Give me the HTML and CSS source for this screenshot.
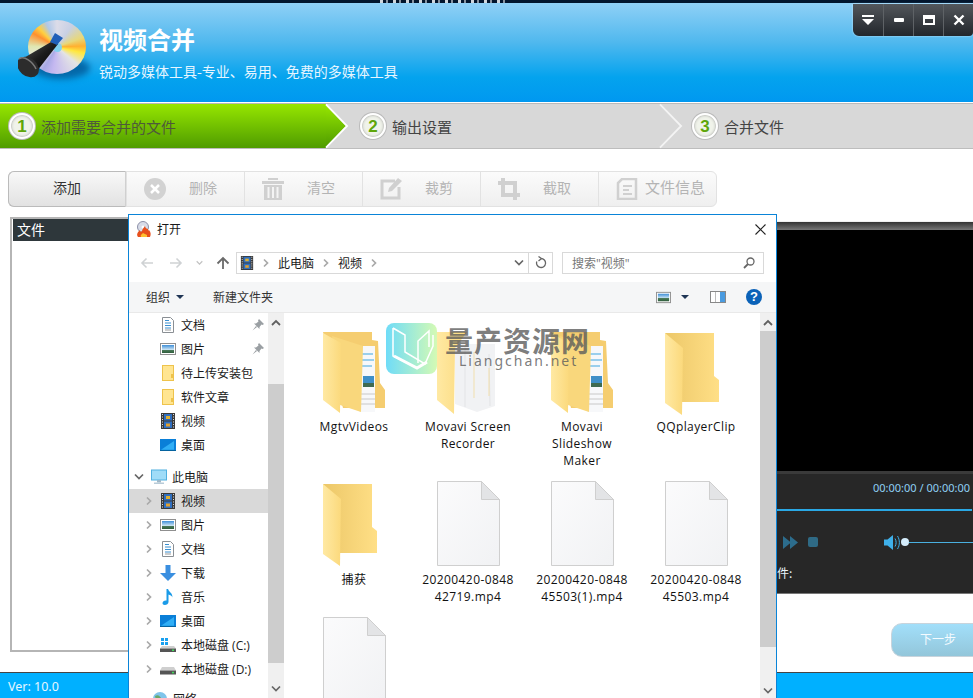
FILE: index.html
```html
<!DOCTYPE html>
<html lang="zh-CN">
<head>
<meta charset="utf-8">
<title>视频合并</title>
<link rel="stylesheet" href="styles.css">
</head>
<body>
<svg class="defs" aria-hidden="true">
  <defs>
    <linearGradient id="gGreen" x1="0" y1="0" x2="0" y2="1"><stop offset="0" stop-color="#96e600"/><stop offset="1" stop-color="#4f9c00"/></linearGradient>
    <linearGradient id="gFlap" x1="0" y1="0" x2="1" y2="0"><stop offset="0" stop-color="#ffe9a3"/><stop offset="1" stop-color="#fbd97c"/></linearGradient>
    <linearGradient id="gBack" x1="0" y1="0" x2="1" y2="0"><stop offset="0" stop-color="#ecc768"/><stop offset="1" stop-color="#ffdf86"/></linearGradient>
    <linearGradient id="gDoc" x1="0" y1="0" x2="1" y2="1"><stop offset="0" stop-color="#fbfbfc"/><stop offset="1" stop-color="#f1f2f4"/></linearGradient>
    <linearGradient id="gSky" x1="0" y1="0" x2="0" y2="1"><stop offset="0" stop-color="#3f8fd8"/><stop offset=".6" stop-color="#cfe6f4"/><stop offset=".6" stop-color="#4d7d5c"/><stop offset="1" stop-color="#2f5d3c"/></linearGradient>
    <symbol id="film" viewBox="0 0 16 16"><rect x="1" y="0" width="14" height="16" fill="#3a3a3a"/><rect x="4" y="1" width="8" height="6.5" fill="#2f6fc0"/><rect x="4" y="8.5" width="8" height="6.5" fill="#2f6fc0"/><rect x="6" y="3" width="4" height="3" fill="#e0b030"/><rect x="6" y="10.500" width="4" height="3" fill="#e0a030"/><path d="M2 1.500h1M2 4h1M2 6.500h1M2 9h1M2 11.500h1M2 14h1M13 1.500h1M13 4h1M13 6.500h1M13 9h1M13 11.500h1M13 14h1" stroke="#ddd" stroke-width="1.200"/></symbol>
    <symbol id="sdoc" viewBox="0 0 16 16"><path d="M2.500.5h8l3 3v12h-11z" fill="#fff" stroke="#8a8f94"/><path d="M5 3.500h4M5 6h6M5 8.500h6M5 11h6" stroke="#3a8fd0" stroke-width="1.100"/><path d="M5 13h6" stroke="#999"/></symbol>
    <symbol id="spic" viewBox="0 0 16 16"><rect x=".5" y="2.500" width="15" height="11" fill="#fff" stroke="#8f8f8f"/><rect x="2" y="4" width="12" height="8" fill="url(#gSky)"/></symbol>
    <symbol id="sfolder" viewBox="0 0 16 16"><rect x="2.500" y=".5" width="11" height="15" fill="#ffe591" stroke="#eec34c"/><rect x="11" y="9" width="2" height="4" fill="#eec34c"/></symbol>
    <symbol id="sdesk" viewBox="0 0 16 16"><rect x="0" y="2" width="16" height="12" fill="#0a7fd8"/><path d="M1 12.800 14 4v8.800z" fill="#30aef5"/><rect x="0" y="13" width="16" height="1" fill="#05639f"/></symbol>
    <symbol id="spc" viewBox="0 0 16 16"><rect x=".5" y="1" width="15" height="10" fill="#9fdcf8" stroke="#50b0e0"/><rect x="6" y="11" width="4" height="2.500" fill="#9fb8c8"/><rect x="3" y="13.500" width="10" height="1.500" fill="#b8cbd8"/></symbol>
    <symbol id="sdown" viewBox="0 0 16 16"><path d="M5.500 0h5v8H16l-8 8-8-8h5.500z" fill="#3a8fe0"/></symbol>
    <symbol id="snote" viewBox="0 0 16 16"><path d="M6.500 0h1.600c.5 3 4.900 4 4.200 8.500C12 6.500 10 6 8.500 5.500V13c0 2-2 3-3.700 3C3.200 16 2.500 15 2.500 14c0-1.500 2-3 4-2.500z" fill="#1a9be8"/></symbol>
    <symbol id="sdriveC" viewBox="0 0 16 16"><rect x="1" y="1" width="3" height="3" fill="#18a0f0"/><rect x="5" y="1" width="3" height="3" fill="#18a0f0"/><rect x="1" y="5" width="3" height="3" fill="#18a0f0"/><rect x="5" y="5" width="3" height="3" fill="#18a0f0"/><path d="M2 9h12l2 2.500H0z" fill="#cfcfcf"/><rect y="11.500" width="16" height="3.500" fill="#555"/><rect x="12" y="12.500" width="2" height="1.500" fill="#3fdc5a"/></symbol>
    <symbol id="sdriveD" viewBox="0 0 16 16"><path d="M2 6h12l2 3.500H0z" fill="#cfcfcf"/><rect y="9.500" width="16" height="4" fill="#555"/><rect x="12" y="10.800" width="2" height="1.500" fill="#3fdc5a"/></symbol>
    <symbol id="snet" viewBox="0 0 16 16"><circle cx="8" cy="8" r="7" fill="#7fc4ea"/><path d="M3 5c3-2 5 0 6 2s-3 4-5 2z" fill="#6aa86a"/></symbol>
    <symbol id="gt" viewBox="0 0 8 10"><path d="M2 1.500 5.500 5 2 8.500" fill="none" stroke="#a9a9a9" stroke-width="1.700"/></symbol>
    <symbol id="dn" viewBox="0 0 10 8"><path d="M1 1.500 5 5.500 9 1.500" fill="none" stroke="#666" stroke-width="1.700"/></symbol>
    <symbol id="up" viewBox="0 0 10 8"><path d="M1 6 5 2 9 6" fill="none" stroke="#606060" stroke-width="1.800"/></symbol>
    <symbol id="pin" viewBox="0 0 12 12"><path d="M7 0 12 5 10.500 6 9.500 5.500 7.500 8 7.500 10 2 4.500 4 4.500 6.500 2.500 6 1.500zM4 7 .5 11.500 5 8z" fill="#9a9fa3"/></symbol>
    <symbol id="bigdoc" viewBox="0 0 63 85"><path d="M.5.5h44l18 18v66H.5z" fill="url(#gDoc)" stroke="#cfcfcf"/><path d="M44.500.5v18h18z" fill="#e3e4e6" stroke="#cfcfcf"/></symbol>
    <symbol id="fplain" viewBox="0 0 54 82"><path d="M0 0h49v43l5 4v22H17L0 0z" fill="url(#gBack)"/><path d="M0 0 18 15 17 82 0 70z" fill="url(#gFlap)"/></symbol>
    <symbol id="fdocs" viewBox="0 0 62 84"><path d="M0 0h49v8l6 1 2 42 5 7 1 18H20z" fill="#f5cd70"/><path d="M36 14h16v66H36z" fill="#f7f8fa"/><path d="M39 22h11M39 28h12M39 34h10" stroke="#3fa5e0" stroke-width="1.200"/><rect x="40" y="44" width="11" height="11" fill="#3f8fc8"/><rect x="40" y="51" width="11" height="4" fill="#3f6a50"/><path d="M38 62h14M38 67h14M38 72h14" stroke="#c8c8c8"/><path d="M9 4 40 14 38 80 17 73z" fill="#f9d77c"/><path d="M0 1 18 11 17 81 0 68z" fill="url(#gFlap)"/></symbol>
    <symbol id="fwhite" viewBox="0 0 62 84"><path d="M18 12h40v62l-18 6-22-8z" fill="#f1f2f4"/><path d="M28 15v60M52 22 53 74" stroke="#e3e4e6"/><path d="M37 20v46M52 36v28" stroke="#f1dfae"/><path d="M0 0h30L18 16 17 82 0 68z" fill="url(#gFlap)"/></symbol>
  </defs>
</svg>

<div class="app">
  <div class="topstrip"><span class="topstrip-bits"></span></div>
  <header class="header">
    <div class="logo">
      <div class="logo-shadow"></div>
      <div class="logo-disc"><div class="logo-hole"></div></div>
      <svg class="logo-torch" viewBox="0 0 72 68"><defs><linearGradient id="gTorch" x1="0" y1="0" x2="1" y2="1"><stop offset="0" stop-color="#555"/><stop offset=".5" stop-color="#1c1c1c"/><stop offset="1" stop-color="#000"/></linearGradient></defs><path d="M33 23 40 25 19 52 4 40z" fill="url(#gTorch)"/><path d="M32 23 37 14 45 19 39 26z" fill="#1f5fb8"/><ellipse cx="10" cy="48" rx="12" ry="9" transform="rotate(40 10 48)" fill="#2c2c2c"/><path d="M1 40C6 36 15 43 18 50" fill="none" stroke="#7a7a7a" stroke-width="1.500"/></svg>
    </div>
    <div class="brand">
      <h1 class="brand-title">视频合并</h1>
      <p class="brand-sub">锐动多媒体工具-专业、易用、免费的多媒体工具</p>
    </div>
    <div class="winctl">
      <button class="winbtn"><svg width="14" height="14" viewBox="0 0 14 14"><path d="M1 2h12v2H1zM1 6h12l-6 6z" fill="#fff"/></svg></button>
      <button class="winbtn"><svg width="12" height="12" viewBox="0 0 12 12"><rect x="1" y="4" width="10" height="4" rx="1" fill="#fff"/></svg></button>
      <button class="winbtn"><svg width="12" height="12" viewBox="0 0 12 12"><path d="M0 1h12v10H0zM2 5v4h8V5z" fill="#fff" fill-rule="evenodd"/></svg></button>
      <button class="winbtn"><svg width="12" height="12" viewBox="0 0 12 12"><path d="M1.500 1.500l9 9M10.500 1.500l-9 9" stroke="#fff" stroke-width="2.400"/></svg></button>
    </div>
  </header>

  <nav class="steps">
    <div class="step step-active step-one"><span class="step-num">1</span><span class="step-text">添加需要合并的文件</span></div>
    <svg class="chev" viewBox="0 0 24 45"><path d="M0 0 22 22.500 0 45z" fill="url(#gGreen)"/><path d="M0 -1 23 22.500 0 46" fill="none" stroke="#fff" stroke-width="2"/></svg>
    <div class="step step-two"><span class="step-num">2</span><span class="step-text">输出设置</span></div>
    <svg class="chev" viewBox="0 0 24 45"><path d="M0 -1 23 22.500 0 46" fill="none" stroke="#f4f4f4" stroke-width="2"/></svg>
    <div class="step step-three"><span class="step-num">3</span><span class="step-text">合并文件</span></div>
  </nav>

  <div class="toolbar">
    <button class="tool tool-add">添加</button>
    <button class="tool"><svg class="tool-icon" viewBox="0 0 22 22"><circle cx="11" cy="11" r="11" fill="#d2d2d2"/><path d="M7 7l8 8M15 7l-8 8" stroke="#fff" stroke-width="2.500"/></svg><span>删除</span></button>
    <button class="tool"><svg class="tool-icon" viewBox="0 0 22 22"><path d="M0 3h22v3H0zM6 0h10v2H6zM2 7h18v15H2zM6 9v11M11 9v11M16 9v11" fill="#d0d0d0"/><path d="M6.500 9v11M11 9v11M15.500 9v11" stroke="#f4f4f4" stroke-width="2"/></svg><span>清空</span></button>
    <button class="tool"><svg class="tool-icon" viewBox="0 0 22 22"><path d="M15 3H2v17h17V9" fill="none" stroke="#d0d0d0" stroke-width="3"/><path d="M9 10 18 0l4 3-10 10-4 1z" fill="#d0d0d0"/></svg><span>裁剪</span></button>
    <button class="tool"><svg class="tool-icon" viewBox="0 0 22 22"><path d="M5 0v17h17M0 5h17v17" fill="none" stroke="#d0d0d0" stroke-width="4"/></svg><span>截取</span></button>
    <button class="tool tool-wide"><svg class="tool-icon" viewBox="0 0 22 22"><path d="M6 1h14v20H2V5z" fill="none" stroke="#d0d0d0" stroke-width="2.500"/><path d="M7 8h9M7 12h6M7 16h9" stroke="#d0d0d0" stroke-width="2"/></svg><span>文件信息</span></button>
  </div>

  <main class="main">
    <section class="filelist"><div class="filelist-head">文件</div></section>
    <section class="rightcol">
      <div class="player">
        <div class="player-top"></div>
        <div class="player-video"></div>
        <div class="player-panel">
          <div class="player-time">00:00:00 / 00:00:00</div>
          <div class="player-line"></div>
          <div class="player-controls">
            <svg class="ctl-ff" viewBox="0 0 15 13"><path d="M0 0 8 6.500 0 13zM7 0 15 6.500 7 13z" fill="#2c6c8c"/></svg>
            <span class="ctl-stop"></span>
            <svg class="ctl-vol" viewBox="0 0 16 15"><path d="M0 4.500h3.500L9 0v15L3.500 10.500H0z" fill="#3fb0ea"/><path d="M11 3.500c1.500 2.500 1.500 5.500 0 8M13.500 1c2.500 4 2.500 9 0 13" fill="none" stroke="#3fb0ea"/></svg>
            <span class="ctl-knob"></span>
            <span class="ctl-slider"></span>
          </div>
          <div class="player-file">件:</div>
        </div>
      </div>
      <button class="nextbtn">下一步</button>
    </section>
  </main>

  <footer class="footer">Ver: 10.0</footer>
</div>

<div class="dialog">
  <div class="dlg-title">
    <svg class="dlg-appicon" viewBox="0 0 16 16"><circle cx="7" cy="6" r="5.500" fill="#d8dce8" stroke="#8c90a8"/><circle cx="7" cy="6" r="1.500" fill="#fff"/><path d="M2 16c-2-3 0-5 2-7 0 2 1 2 2 1 0-2 2-3 3-5 0 2 2 3 3 3 0 1 0 2 1 1 2 2 2 5 1 7z" fill="#e8501c"/><path d="M5 16c-1-2 1-3 2-4 1 1 3 1 4 2l0 2z" fill="#ffc030"/></svg>
    <span class="dlg-title-text">打开</span>
    <svg class="dlg-close" viewBox="0 0 11 11"><path d="M.5.5l10 10M10.500.5l-10 10" stroke="#222" stroke-width="1.100"/></svg>
  </div>

  <div class="dlg-nav">
    <svg class="nav-arrow" viewBox="0 0 14 12"><path d="M13 6H2M6.500 1.500 2 6l4.500 4.500" fill="none" stroke="#cfd2d4" stroke-width="1.600"/></svg>
    <svg class="nav-arrow nav-fwd" viewBox="0 0 14 12"><path d="M1 6h11M7.500 1.500 12 6l-4.500 4.500" fill="none" stroke="#cfd2d4" stroke-width="1.600"/></svg>
    <svg class="nav-small"><use href="#dn"/></svg>
    <svg class="nav-up" viewBox="0 0 14 14"><path d="M7 13V2M1.500 7.500 7 2l5.500 5.500" fill="none" stroke="#6a6a6a" stroke-width="1.800"/></svg>
    <div class="addr">
      <svg class="addr-film"><use href="#film"/></svg>
      <svg class="addr-gt"><use href="#gt"/></svg>
      <span>此电脑</span>
      <svg class="addr-gt"><use href="#gt"/></svg>
      <span>视频</span>
      <svg class="addr-gt"><use href="#gt"/></svg>
      <svg class="addr-dd"><use href="#dn"/></svg>
      <span class="addr-refresh"><svg viewBox="0 0 12 13"><path d="M6 2.500a4.500 4.500 0 1 1-4.200 3M3.500.5 6.500 2.500 3.500 5" fill="none" stroke="#666" stroke-width="1.300"/></svg></span>
    </div>
    <div class="search">
      <span class="search-text">搜索"视频"</span>
      <svg class="search-icon" viewBox="0 0 12 12"><circle cx="7.500" cy="4.500" r="3.500" fill="none" stroke="#666" stroke-width="1.300"/><path d="M5 7 1 11" stroke="#666" stroke-width="1.800"/></svg>
    </div>
  </div>

  <div class="dlg-cmd">
    <span class="cmd-item">组织<i class="caret"></i></span>
    <span class="cmd-item cmd-new">新建文件夹</span>
    <svg class="cmd-pic"><use href="#spic"/></svg>
    <i class="caret cmd-caret"></i>
    <svg class="cmd-pane" viewBox="0 0 16 12"><rect x=".5" y=".5" width="15" height="11" fill="#fff" stroke="#888"/><rect x="10" y="1" width="5" height="10" fill="#4a9be0"/><path d="M5.500 1v10" stroke="#bbb"/></svg>
    <span class="cmd-help">?</span>
  </div>

  <div class="dlg-body">
    <div class="tree">
      <div class="row row-l2"><svg class="row-icon"><use href="#sdoc"/></svg><span>文档</span><svg class="row-pin"><use href="#pin"/></svg></div>
      <div class="row row-l2"><svg class="row-icon"><use href="#spic"/></svg><span>图片</span><svg class="row-pin"><use href="#pin"/></svg></div>
      <div class="row row-l2"><svg class="row-icon"><use href="#sfolder"/></svg><span>待上传安装包</span></div>
      <div class="row row-l2"><svg class="row-icon"><use href="#sfolder"/></svg><span>软件文章</span></div>
      <div class="row row-l2"><svg class="row-icon"><use href="#film"/></svg><span>视频</span></div>
      <div class="row row-l2"><svg class="row-icon"><use href="#sdesk"/></svg><span>桌面</span></div>
      <div class="row row-l1 row-group"><svg class="row-exp-dn"><use href="#dn"/></svg><svg class="row-icon"><use href="#spc"/></svg><span>此电脑</span></div>
      <div class="row row-sel"><svg class="row-exp"><use href="#gt"/></svg><svg class="row-icon"><use href="#film"/></svg><span>视频</span></div>
      <div class="row"><svg class="row-exp"><use href="#gt"/></svg><svg class="row-icon"><use href="#spic"/></svg><span>图片</span></div>
      <div class="row"><svg class="row-exp"><use href="#gt"/></svg><svg class="row-icon"><use href="#sdoc"/></svg><span>文档</span></div>
      <div class="row"><svg class="row-exp"><use href="#gt"/></svg><svg class="row-icon"><use href="#sdown"/></svg><span>下载</span></div>
      <div class="row"><svg class="row-exp"><use href="#gt"/></svg><svg class="row-icon"><use href="#snote"/></svg><span>音乐</span></div>
      <div class="row"><svg class="row-exp"><use href="#gt"/></svg><svg class="row-icon"><use href="#sdesk"/></svg><span>桌面</span></div>
      <div class="row"><svg class="row-exp"><use href="#gt"/></svg><svg class="row-icon"><use href="#sdriveC"/></svg><span>本地磁盘 (C:)</span></div>
      <div class="row"><svg class="row-exp"><use href="#gt"/></svg><svg class="row-icon"><use href="#sdriveD"/></svg><span>本地磁盘 (D:)</span></div>
      <div class="row row-l1 row-group2"><svg class="row-icon"><use href="#snet"/></svg><span>网络</span></div>
    </div>
    <div class="scroll scroll-tree">
      <svg class="scroll-btn"><use href="#up"/></svg>
      <div class="thumb thumb-tree"></div>
      <svg class="scroll-btn scroll-btn-dn"><use href="#dn"/></svg>
    </div>
    <div class="files">
      <div class="item"><svg class="ic-folder"><use href="#fdocs"/></svg><div class="label">MgtvVideos</div></div>
      <div class="item"><svg class="ic-folder"><use href="#fwhite"/></svg><div class="label">Movavi Screen Recorder</div></div>
      <div class="item"><svg class="ic-folder"><use href="#fdocs"/></svg><div class="label">Movavi Slideshow Maker</div></div>
      <div class="item"><svg class="ic-plain"><use href="#fplain"/></svg><div class="label">QQplayerClip</div></div>
      <div class="item item-low"><svg class="ic-plain"><use href="#fplain"/></svg><div class="label">捕获</div></div>
      <div class="item item-low"><svg class="ic-doc"><use href="#bigdoc"/></svg><div class="label">20200420-0848 42719.mp4</div></div>
      <div class="item item-low"><svg class="ic-doc"><use href="#bigdoc"/></svg><div class="label">20200420-0848 45503(1).mp4</div></div>
      <div class="item item-low"><svg class="ic-doc"><use href="#bigdoc"/></svg><div class="label">20200420-0848 45503.mp4</div></div>
      <div class="item"><svg class="ic-doc"><use href="#bigdoc"/></svg></div>
    </div>
    <div class="scroll scroll-files">
      <svg class="scroll-btn"><use href="#up"/></svg>
      <div class="thumb thumb-files"></div>
      <svg class="scroll-btn scroll-btn-dn2"><use href="#dn"/></svg>
    </div>
    <div class="wm">
      <div class="wm-tile"><svg viewBox="0 0 51 51"><path d="M8 6 20 13V30L40 42 48 24V13M8 6V34L32 46 41 40" fill="none" stroke="#fff" stroke-width="1.500" transform="translate(-1 -1)"/><path d="M9 36 32 48 42 42" fill="none" stroke="#fff" stroke-width="3" transform="translate(-1 -3)"/><path d="M32 40V18L43 8V24" fill="none" stroke="#fff" stroke-width="1.500"/></svg></div>
      <div class="wm-text">
        <div class="wm-cn">量产资源网</div>
        <div class="wm-en">Liangchan.net</div>
      </div>
    </div>
  </div>
</div>
</body>
</html>
```

FILE: styles.css
```css
* { box-sizing: border-box; }
html, body { margin: 0; padding: 0; height: 698px; overflow: hidden; background: #fff; }
body { position: relative; font-family: "Noto Sans CJK SC", "Noto Sans", sans-serif; color: #333; }
button { font-family: inherit; padding: 0; margin: 0; }
.defs { position: absolute; width: 0; height: 0; }

.app { display: flex; flex-direction: column; height: 698px; width: 973px; overflow: hidden; }
.topstrip { height: 3px; background: #02162e; flex: none; padding-left: 380px; }
.topstrip-bits { display: block; width: 130px; height: 3px; background: repeating-linear-gradient(90deg, #cfd6dc 0 3px, #02162e 3px 6px, #8893a0 6px 8px, #02162e 8px 13px); }

.header { position: relative; flex: none; height: 99px; display: flex; padding: 16px 0 0 18px; background: linear-gradient(#8fd0f6 0%, #4fb8ee 40%, #04a3ee 75%, #0098f0 100%); }
.logo { position: relative; width: 72px; height: 68px; margin-right: 9px; flex: none; }
.logo-shadow { position: absolute; left: 14px; top: 38px; width: 58px; height: 22px; border-radius: 50%; background: #0468a8; filter: blur(3px); }
.logo-disc { position: absolute; left: 10px; top: 1px; width: 58px; height: 54px; border-radius: 50%; display: flex; align-items: center; justify-content: center;
  background: conic-gradient(#dcdce8 0deg, #c8d0e4 35deg, #e8d878 70deg, #ffb030 88deg, #ffe840 103deg, #e4e4e4 130deg, #c4b8f0 190deg, #a8a8e4 212deg, #ececec 240deg, #dfe6b0 272deg, #ff9030 300deg, #ffd040 316deg, #b0c8e8 336deg, #dcdce8 360deg); }
.logo-hole { width: 9px; height: 9px; border-radius: 50%; background: #7fd0f0; }
.logo-torch { position: absolute; left: 0; top: 0; width: 72px; height: 68px; }
.brand { display: flex; flex-direction: column; }
.brand-title { margin: 4px 0 0; font-size: 24px; line-height: 32px; height: 32px; color: #fff; font-weight: 700; }
.brand-sub { margin: 6px 0 0; font-size: 14px; line-height: 20px; color: #e6f5ff; }

.winctl { position: absolute; right: 0; top: 1px; width: 120px; height: 32px; display: flex; background: linear-gradient(#53575c, #22262b); border-bottom-left-radius: 6px; border-bottom-right-radius: 4px; box-shadow: 0 0 2px #d8f0ff; }
.winbtn { width: 30px; height: 32px; border: 0; border-left: 1px solid #5e6266; background: transparent; display: flex; align-items: center; justify-content: center; }
.winbtn:first-child { border-left: 0; }

.steps { flex: none; height: 46px; margin-top: 1px; display: flex; background: #d8d8d8; border-top: 1px solid #b9b9b9; border-bottom: 1px solid #bdbdbd; }
.step { display: flex; align-items: center; height: 100%; font-size: 15px; color: #444; }
.step-one { width: 326px; padding-left: 9px; }
.step-two { width: 312px; padding-left: 12px; }
.step-three { flex: 1; padding-left: 10px; }
.step-active { background: linear-gradient(#96e600, #4f9c00); color: #4e5a3a; }
.chev { width: 22px; height: 44px; flex: none; overflow: visible; }
.step-num { width: 26px; height: 26px; border-radius: 50%; margin-right: 6px; background: #f0f3ea; border: 2px solid #fff; box-shadow: 0 0 0 1px #bbb, inset 0 0 3px #999; display: flex; align-items: center; justify-content: center; font: 700 17px/1 "Liberation Sans", sans-serif; color: #5fa60a; }

.toolbar { flex: none; display: flex; width: 709px; height: 36px; margin: 22px 0 0 8px; border: 1px solid #e2e2e2; border-radius: 6px; background: linear-gradient(#fbfbfb, #efefef); }
.tool { width: 118px; height: 100%; display: flex; align-items: center; border: 0; border-left: 1px solid #e2e2e2; background: transparent; font-size: 14px; color: #b4b4b4; padding-left: 17px; flex: none; }
.tool span { margin-left: 23px; padding-bottom: 5px; }
.tool-icon { width: 22px; height: 22px; flex: none; }
.tool-wide span { margin-left: 7px; font-size: 15px; }
.tool-add { width: 118px; margin: -1px 0 -1px -1px; height: 36px; padding: 0 0 5px; justify-content: center; color: #333; font-size: 14px; background: linear-gradient(#f8f8f8, #e2e2e2); border: 1px solid #bbb; border-right-color: #d0d0d0; border-radius: 6px 0 0 6px; }

.main { flex: 1; display: flex; min-height: 0; padding-top: 10px; }
.filelist { width: 760px; height: 435px; margin-left: 10px; border: 2px solid #b5b5b5; border-right: 0; flex: none; }
.filelist-head { height: 22px; margin-left: 1px; background: #2e373b; color: #fff; font-size: 14px; line-height: 21px; padding-left: 4px; }
.rightcol { flex: none; width: 196px; margin-left: 7px; display: flex; flex-direction: column; padding-top: 4px; }
.player { height: 373px; display: flex; flex-direction: column; background: #000; }
.player-top { height: 9px; background: linear-gradient(#f0f0f0 0 1px, #333 1px, #777 100%); }
.player-video { flex: 1; background: #000; }
.player-panel { height: 123px; background: #272727; border-top: 3px solid #3a3a3a; border-bottom: 1px solid #777; display: flex; flex-direction: column; }
.player-time { height: 24px; margin-top: 2px; padding-left: 96px; font: 11px/24px "Noto Sans", sans-serif; color: #8fd0f4; white-space: nowrap; }
.player-line { height: 2px; margin: 9px 1px 0 0; background: #2aa8e4; }
.player-controls { display: flex; align-items: center; height: 16px; margin-top: 23px; padding-left: 6px; }
.ctl-ff { width: 15px; height: 13px; flex: none; }
.ctl-stop { width: 10px; height: 10px; border-radius: 2px; background: #2f6a85; margin-left: 10px; flex: none; }
.ctl-vol { width: 16px; height: 15px; margin-left: 66px; flex: none; }
.ctl-knob { width: 8px; height: 8px; border-radius: 50%; background: #d4ecfb; margin-left: 1px; flex: none; }
.ctl-slider { flex: 1; height: 1px; background: #4ab0e0; }
.player-file { margin-top: 15px; font-size: 12px; line-height: 16px; color: #e8f4fb; }
.nextbtn { width: 100px; height: 34px; margin: 29px 0 0 114px; flex: none; border: 1px solid #c8d4dc; border-radius: 11px; background: linear-gradient(#a2dffa, #93c6da); color: #f4fbff; font-size: 12px; text-align: left; padding: 0 0 3px 28px; }

.footer { flex: none; height: 26px; background: #00b0ff; border-top: 1px solid #444; color: #e6f7ff; font: 12.500px/28px "Noto Sans", sans-serif; padding-left: 8px; }

.dialog { position: absolute; left: 128px; top: 214px; width: 649px; height: 484px; background: #fff; border: 1px solid #0a84d8; border-bottom: 0; display: flex; flex-direction: column; overflow: hidden; font-size: 12px; color: #1a1a1a; font-family: "Open Sans", "Noto Sans CJK SC", sans-serif; }
.dlg-title { flex: none; height: 28px; display: flex; align-items: center; padding-left: 7px; }
.dlg-appicon { width: 16px; height: 16px; }
.dlg-title-text { margin-left: 5px; flex: 1; }
.dlg-close { width: 11px; height: 11px; margin-right: 10px; }
.dlg-nav { flex: none; height: 39px; display: flex; align-items: center; padding: 0 12px 0 11px; }
.nav-arrow { width: 14px; height: 12px; margin-left: 0; }
.nav-fwd { margin-left: 15px; }
.nav-small { width: 7px; height: 6px; margin-left: 13px; opacity: .4; }
.nav-up { width: 14px; height: 14px; margin-left: 13px; }
.addr { width: 317px; height: 22px; margin-left: 6px; border: 1px solid #d9d9d9; display: flex; align-items: center; padding-left: 3px; }
.addr-film { width: 14px; height: 14px; flex: none; }
.addr-gt { width: 8px; height: 10px; margin: 0 8px; flex: none; }
.addr-dd { width: 10px; height: 8px; margin-left: auto; }
.addr-refresh { width: 24px; height: 100%; margin-left: 4px; border-left: 1px solid #d9d9d9; display: flex; align-items: center; justify-content: center; }
.addr-refresh svg { width: 12px; height: 13px; }
.search { width: 202px; height: 22px; margin-left: 9px; border: 1px solid #d9d9d9; display: flex; align-items: center; padding: 0 8px 0 9px; color: #777; }
.search-text { flex: 1; }
.search-icon { width: 12px; height: 12px; }
.dlg-cmd { flex: none; height: 31px; background: #f5f6f7; border-bottom: 1px solid #e9e9e9; display: flex; align-items: center; padding-left: 17px; color: #333; }
.cmd-item { display: flex; align-items: center; }
.cmd-new { margin-left: 29px; }
.caret { display: inline-block; width: 0; height: 0; margin-left: 6px; border: 4px solid transparent; border-top: 4px solid #1f3555; border-bottom: 0; }
.cmd-pic { width: 15px; height: 15px; margin-left: auto; }
.cmd-caret { margin-left: 10px; width: 0; }
.cmd-pane { width: 16px; height: 12px; margin-left: 21px; }
.cmd-help { width: 16px; height: 16px; border-radius: 50%; background: #0b62b8; color: #fff; font: 700 13px/16px "Liberation Sans", sans-serif; text-align: center; margin: 0 14px 0 20px; }

.dlg-body { position: relative; flex: 1; min-height: 0; display: flex; }
.tree { width: 139px; flex: none; overflow: hidden; }
.row { height: 24px; display: flex; align-items: center; white-space: nowrap; padding-left: 16px; }
.row-l2 { padding-left: 31px; position: relative; }
.row-icon { width: 16px; height: 16px; flex: none; margin-right: 5px; }
.row-exp, .row-exp-dn { flex: none; }
.row-exp { width: 8px; height: 10px; margin-right: 7px; }
.row-exp-dn { width: 10px; height: 8px; margin-right: 7px; }
.row-pin { position: absolute; left: 123px; top: 6px; width: 12px; height: 12px; }
.row-sel { background: #d9d9d9; }
.row-group { margin-top: 8px; padding-left: 5px; }
.row-group2 { margin-top: 6px; padding-left: 23px; }
.scroll { width: 16px; flex: none; background: #f0f0f0; position: relative; display: flex; flex-direction: column; align-items: center; }
.scroll-btn { width: 10px; height: 8px; margin-top: 6px; flex: none; }
.thumb { width: 100%; flex: none; background: #cdcdcd; }
.thumb-tree { height: 279px; margin-top: 57px; }
.scroll-btn-dn { margin-top: 22px; }
.thumb-files { height: 316px; margin-top: 4px; }
.scroll-btn-dn2 { margin-top: 40px; }

.files { flex: 1; min-width: 0; display: grid; grid-template-columns: repeat(4, 114px); grid-auto-rows: min-content; align-content: start; row-gap: 12px; padding: 17px 0 0 13px; overflow: hidden; }
.item { display: flex; flex-direction: column; align-items: center; text-align: center; }
.ic-folder { width: 62px; height: 84px; margin-top: 2px; margin-bottom: 2px; flex: none; }
.ic-plain { width: 54px; height: 82px; margin-top: 3px; margin-bottom: 3px; margin-left: -8px; flex: none; }
.ic-doc { width: 63px; height: 85px; margin-bottom: 3px; flex: none; }
.label { width: 96px; font-size: 12px; line-height: 17px; letter-spacing: .4px; color: #111; }
.item-low .label { margin-top: 2px; }

.wm { position: absolute; left: 257px; top: 10px; display: flex; pointer-events: none; }
.wm-tile { width: 51px; height: 51px; border-radius: 8px; background: linear-gradient(90deg, #6fdcf8, #d4fab4); }
.wm-tile svg { display: block; width: 51px; height: 51px; }
.wm-text { margin-left: 8px; }
.wm-cn { font-size: 28px; line-height: 26px; margin-top: 5px; font-weight: 700; letter-spacing: 1px; color: rgba(90, 90, 90, .8); white-space: nowrap; }
.wm-en { font: 14px/14px "Noto Sans", sans-serif; letter-spacing: 2px; margin: 0 0 0 14px; color: rgba(90, 90, 90, .8); white-space: nowrap; }
```
